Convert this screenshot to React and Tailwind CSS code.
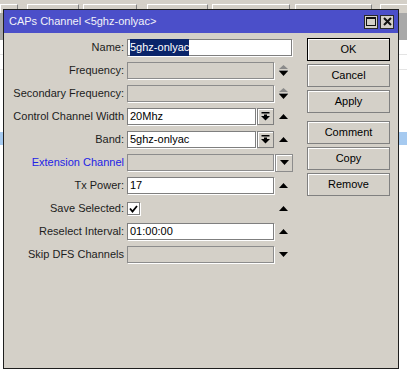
import React from 'react'

const btn = 'flex h-[23px] w-[83px] items-center justify-center bg-[#d4d0c8] text-[11px] text-black border border-[#808080] shadow-[inset_1px_1px_0_#ffffff]'

const UpArrow = () => (
  <svg width="9" height="5" viewBox="0 0 9 5"><polygon points="4.5,0 9,5 0,5" fill="#000" /></svg>
)

const DownArrow = () => (
  <svg width="9" height="5" viewBox="0 0 9 5"><polygon points="0,0 9,0 4.5,5" fill="#000" /></svg>
)

const Spinner = () => (
  <svg width="9" height="11" viewBox="0 0 9 11">
    <polygon points="4.5,0 9,4 0,4" fill="#8a8a8a" />
    <rect x="0" y="5" width="9" height="1" fill="#8a8a8a" />
    <polygon points="0,6 9,6 4.5,11" fill="#000" />
  </svg>
)

const DropIcon = () => (
  <svg width="9" height="9" viewBox="0 0 9 9">
    <rect x="0.5" y="0" width="8" height="1.5" fill="#000" />
    <rect x="3" y="2.5" width="3" height="2" fill="#000" />
    <polygon points="0,4 9,4 4.5,8.5" fill="#000" />
  </svg>
)

const Label = ({ children, blue }) => (
  <div className={`w-[120px] shrink-0 text-right text-[11px] leading-none ${blue ? 'text-[#2323e6]' : 'text-[#1c1c1c]'}`}>
    {children}
  </div>
)

const TextBox = ({ w, children }) => (
  <div className={`${w} flex h-[17px] items-center border border-[#7f7f7f] bg-white pl-[2px] text-[11px] text-black shadow-[1px_1px_0_#ffffff]`}>
    {children}
  </div>
)

const Disabled = ({ w }) => (
  <div className={`${w} h-[17px] border border-[#8c8c8c] bg-[#d4d0c8] shadow-[1px_1px_0_#ffffff]`} />
)

const Row = ({ children }) => <div className="flex h-[23px] items-center">{children}</div>

const Field = ({ children }) => <div className="ml-[3px] flex w-[152px] shrink-0 items-center">{children}</div>

const Side = ({ children }) => <div className="flex w-[9px] justify-center">{children}</div>

export default function App() {
  const headerBoxes = [
    'ml-0 w-[18px]',
    'ml-[9px] w-[52px]',
    'ml-[4px] w-[54px]',
    'ml-[10px] w-[61px]',
    'ml-[4px] w-[78px]',
    'ml-[5px] w-[77px]',
    'ml-[8px] w-[40px]',
  ]

  return (
    <div className="relative h-[375px] w-[407px] overflow-hidden bg-[#d4d0c8] font-['Liberation_Sans',Arial,sans-serif]">
      {/* table behind the dialog */}
      <div className="flex h-[13px] items-end">
        {headerBoxes.map((c, i) => (
          <div key={i} className={`${c} h-[9px] shrink-0 border-l border-t border-r border-l-white border-t-white border-r-[#808080] bg-[#d4d0c8]`} />
        ))}
      </div>
      <div className="h-[27px] bg-[#a8a8a8]" />
      <div className="h-[92px] bg-white">
        <div className="h-[15px] border-b border-[#e4e4e4]" />
        <div className="h-[15px] border-b border-[#e4e4e4]" />
      </div>
      <div className="h-[13px] bg-[#a6caf0]" />
      <div className="h-[230px] bg-white" />

      {/* dialog window */}
      <div className="absolute left-[3px] top-[9px] flex h-[360px] w-[396px] flex-col border border-[#1e1e1e] bg-[#d4d0c8]">
        <div className="flex h-[23px] shrink-0 items-center bg-[#4b4fc9] pl-[5px] pr-[4px]">
          <span className="flex-1 text-[11px] text-[#f2f2f8]">CAPs Channel &lt;5ghz-onlyac&gt;</span>
          <div className="flex h-[14px] w-[14px] items-center justify-center border border-[#2a2a2a] bg-[#d4d0c8]">
            <div className="h-[9px] w-[10px] border border-t-2 border-[#111]" />
          </div>
          <div className="ml-[2px] flex h-[14px] w-[14px] items-center justify-center border border-[#2a2a2a] bg-[#d4d0c8]">
            <svg width="9" height="9" viewBox="0 0 9 9">
              <path d="M1 1 L8 8 M8 1 L1 8" stroke="#111" strokeWidth="2" />
            </svg>
          </div>
        </div>

        <div className="flex flex-1">
          <div className="w-[303px] shrink-0 pt-[3px]">
            <Row>
              <Label>Name:</Label>
              <div className="ml-[3px]">
                <TextBox w="w-[165px]">
                  <span className="bg-[#0a246a] text-white">5ghz-onlyac</span>
                </TextBox>
              </div>
            </Row>
            <Row>
              <Label>Frequency:</Label>
              <Field><Disabled w="w-[147px]" /></Field>
              <Side><Spinner /></Side>
            </Row>
            <Row>
              <Label>Secondary Frequency:</Label>
              <Field><Disabled w="w-[147px]" /></Field>
              <Side><Spinner /></Side>
            </Row>
            <Row>
              <Label>Control Channel Width</Label>
              <Field>
                <TextBox w="w-[129px]">20Mhz</TextBox>
                <div className="ml-[1px] flex h-[17px] w-[17px] items-center justify-center border border-[#7f7f7f] bg-[#d4d0c8] shadow-[inset_1px_1px_0_#ffffff]">
                  <DropIcon />
                </div>
              </Field>
              <Side><UpArrow /></Side>
            </Row>
            <Row>
              <Label>Band:</Label>
              <Field>
                <TextBox w="w-[129px]">5ghz-onlyac</TextBox>
                <div className="ml-[1px] flex h-[17px] w-[17px] items-center justify-center border border-[#7f7f7f] bg-[#d4d0c8] shadow-[inset_1px_1px_0_#ffffff]">
                  <DropIcon />
                </div>
              </Field>
              <Side><UpArrow /></Side>
            </Row>
            <Row>
              <Label blue>Extension Channel</Label>
              <div className="ml-[3px] flex items-center">
                <Disabled w="w-[147px]" />
                <div className="ml-[1px] flex h-[18px] w-[18px] items-center justify-center border border-[#8c8c8c] bg-[#d4d0c8] shadow-[inset_1px_1px_0_#ffffff]">
                  <DownArrow />
                </div>
              </div>
            </Row>
            <Row>
              <Label>Tx Power:</Label>
              <Field><TextBox w="w-[147px]">17</TextBox></Field>
              <Side><UpArrow /></Side>
            </Row>
            <Row>
              <Label>Save Selected:</Label>
              <Field>
                <div className="flex h-[13px] w-[13px] items-center justify-center border border-[#7f7f7f] bg-white shadow-[1px_1px_0_#ffffff]">
                  <svg width="9" height="8" viewBox="0 0 9 8">
                    <path d="M1 3.5 L3.5 6.5 L8 1" fill="none" stroke="#000" strokeWidth="1.8" />
                  </svg>
                </div>
              </Field>
              <Side><UpArrow /></Side>
            </Row>
            <Row>
              <Label>Reselect Interval:</Label>
              <Field><TextBox w="w-[147px]">01:00:00</TextBox></Field>
              <Side><UpArrow /></Side>
            </Row>
            <Row>
              <Label>Skip DFS Channels</Label>
              <Field><Disabled w="w-[147px]" /></Field>
              <Side><DownArrow /></Side>
            </Row>
          </div>

          <div className="flex flex-col gap-[3px] pt-[5px]">
            <button className={`${btn} border-black shadow-[inset_1px_1px_0_#ffffff,inset_-1px_-1px_0_#808080]`}>OK</button>
            <button className={btn}>Cancel</button>
            <button className={btn}>Apply</button>
            <button className={`${btn} mt-[5px]`}>Comment</button>
            <button className={btn}>Copy</button>
            <button className={btn}>Remove</button>
          </div>
        </div>
      </div>
    </div>
  )
}
